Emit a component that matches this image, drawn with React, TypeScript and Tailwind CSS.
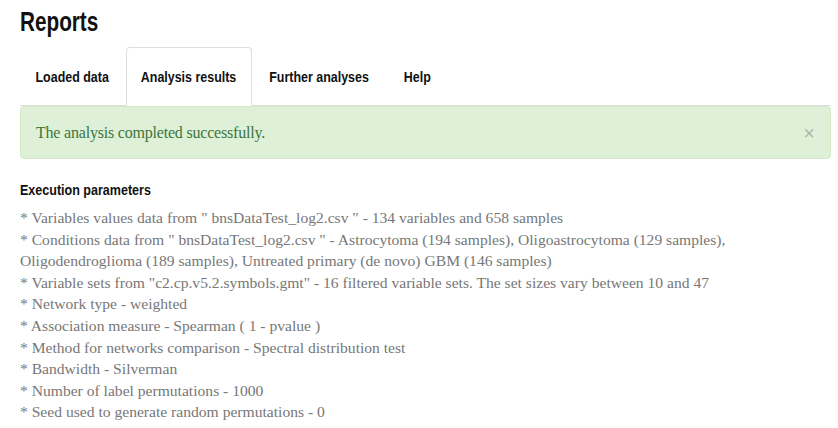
import React from "react";

const sans = { fontFamily: '"Liberation Sans", Arial, sans-serif' };
const serif = { fontFamily: '"Liberation Serif", "Times New Roman", serif' };

const lines = [
  '* Variables values data from " bnsDataTest_log2.csv " - 134 variables and 658 samples',
  '* Conditions data from " bnsDataTest_log2.csv " - Astrocytoma (194 samples), Oligoastrocytoma (129 samples), Oligodendroglioma (189 samples), Untreated primary (de novo) GBM (146 samples)',
  '* Variable sets from "c2.cp.v5.2.symbols.gmt" - 16 filtered variable sets. The set sizes vary between 10 and 47',
  "* Network type - weighted",
  "* Association measure - Spearman ( 1 - pvalue )",
  "* Method for networks comparison - Spectral distribution test",
  "* Bandwidth - Silverman",
  "* Number of label permutations - 1000",
  "* Seed used to generate random permutations - 0",
];

const tabs = [
  { label: "Loaded data", w: "w-[104px]" },
  { label: "Analysis results", w: "w-[126px]" },
  { label: "Further analyses", w: "w-[131px]" },
  { label: "Help", w: "w-[60px]" },
];

export default function App() {
  return (
    <div className="w-[838px] h-[428px] bg-white overflow-hidden pl-[20px] pr-[7px]" style={sans}>
      <h1 className="h-[39px] pt-[6px] text-[28px] font-bold text-[#111] leading-[32px]">
        <span className="inline-block origin-left scale-x-[0.74]">Reports</span>
      </h1>
      <ul className="flex mt-[8px] border-b border-[#ddd]">
        {tabs.map((t, i) => (
          <li
            key={t.label}
            className={
              i === 1
                ? "w-[126px] mr-[2px] -mb-px pt-[2px] h-[59px] flex items-center justify-center rounded-t-[4px] border border-[#ddd] border-b-transparent bg-white text-[15px] font-bold text-[#111] whitespace-nowrap"
                : `${t.w} mr-[2px] pt-[2px] h-[58px] flex items-center justify-center border border-transparent text-[15px] font-bold text-[#111] whitespace-nowrap`
            }
          >
            <span className="inline-block scale-x-[0.83]">{t.label}</span>
          </li>
        ))}
      </ul>
      <div className="h-[53px] rounded-[4px] border border-[#d6e9c6] bg-[#dff0d8] flex items-center justify-between pl-[15px] pr-[15px]">
        <span className="text-[16px] text-[#3c763d] tracking-[-0.2px]" style={serif}>
          The analysis completed successfully.
        </span>
        <span className="text-[20px] text-black/25 leading-none">×</span>
      </div>
      <h2 className="mt-[21px] text-[15px] font-bold text-[#111] leading-[20px] whitespace-nowrap">
        <span className="inline-block origin-left scale-x-[0.835]">Execution parameters</span>
      </h2>
      <div className="mt-[7px] text-[15.6px] leading-[21.6px] text-[#777]" style={serif}>
        {lines.map((l) => (
          <div key={l}>{l}</div>
        ))}
      </div>
    </div>
  );
}
